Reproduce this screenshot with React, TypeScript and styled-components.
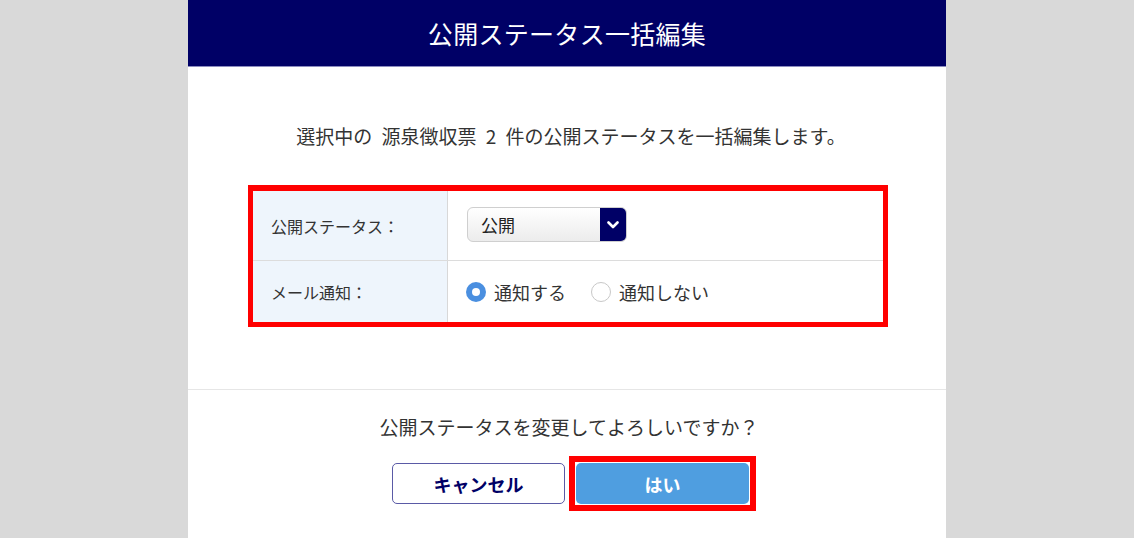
import React from "react";
import styled, { createGlobalStyle } from "styled-components";

const Global = createGlobalStyle`
  html, body { margin: 0; padding: 0; background: #d9d9d9; }
  body { font-family: Meiryo, "Noto Sans CJK JP", "Noto Sans", sans-serif; color: #333; }
  * { box-sizing: border-box; }
`;

const Modal = styled.div`
  width: 758px;
  height: 538px;
  margin: 0 auto;
  background: #fff;
  display: flex;
  flex-direction: column;
  overflow: hidden;
`;

const Header = styled.header`
  height: 67px;
  flex: none;
  background: #000066;
  border-bottom: 1px solid #8c8cc0;
  display: flex;
  align-items: center;
  justify-content: center;
  color: #fff;
  font-size: 25px;
  letter-spacing: 0.3px;
`;

const Body = styled.section`
  padding: 55px 58px 62px 60px;
  border-bottom: 1px solid #e6e6e6;
  display: flex;
  flex-direction: column;
  align-items: center;
`;

const Lead = styled.p`
  margin: 0 0 35px;
  font-size: 19px;
  line-height: 28px;
  color: #333;
  word-spacing: 5px;
  padding-left: 6px;
`;

const FormBox = styled.div`
  width: 640px;
  border: 5px solid #ff0000;
  border-top-width: 6px;
  display: flex;
  flex-direction: column;
`;

const Row = styled.div<{ $h: number; $last?: boolean }>`
  height: ${(p) => p.$h}px;
  display: grid;
  grid-template-columns: 195px 1fr;
  border-bottom: ${(p) => (p.$last ? "none" : "1.5px solid #dcdcdc")};
`;

const Label = styled.div`
  background: #eef5fc;
  border-right: 1.5px solid #d8d8d8;
  display: flex;
  align-items: center;
  padding-left: 18px;
  font-size: 16px;
  color: #333;
`;

const Value = styled.div`
  display: flex;
  align-items: center;
  padding-left: 18px;
  gap: 25px;
`;

const Select = styled.div`
  width: 160px;
  height: 35px;
  margin-top: -2px;
  margin-left: 1px;
  border: 1px solid #cfcfcf;
  border-radius: 6px;
  background: linear-gradient(#ffffff, #ececec);
  display: flex;
  overflow: hidden;
`;

const SelectText = styled.span`
  flex: 1;
  display: flex;
  align-items: center;
  padding-left: 13px;
  font-size: 17px;
  color: #222;
`;

const SelectArrow = styled.span`
  width: 26px;
  background: #000066;
  display: flex;
  align-items: center;
  justify-content: center;
`;

const RadioItem = styled.label`
  display: flex;
  align-items: center;
  gap: 8px;
  font-size: 18px;
  color: #333;
`;

const RadioDot = styled.span<{ $on?: boolean }>`
  width: 20px;
  height: 20px;
  border-radius: 50%;
  background: ${(p) => (p.$on ? "#4a8fe0" : "#fff")};
  border: ${(p) => (p.$on ? "none" : "1px solid #c8c8c8")};
  display: flex;
  align-items: center;
  justify-content: center;
  &::after {
    content: "";
    width: 8px;
    height: 8px;
    border-radius: 50%;
    background: #fff;
    display: ${(p) => (p.$on ? "block" : "none")};
  }
`;

const Footer = styled.section`
  padding-top: 23px;
  display: flex;
  flex-direction: column;
  align-items: center;
`;

const Question = styled.p`
  margin: 0 0 15px;
  font-size: 19px;
  line-height: 28px;
  color: #333;
  padding-left: 4px;
`;

const Buttons = styled.div`
  display: flex;
  align-items: center;
  gap: 4px;
  padding-left: 14px;
`;

const Highlight = styled.span`
  display: flex;
  border: 6px solid #ff0000;
  padding: 1px;
`;

const Button = styled.button<{ $primary?: boolean }>`
  width: 173px;
  height: 41px;
  border-radius: 5px;
  font-family: inherit;
  font-size: 18px;
  font-weight: bold;
  cursor: pointer;
  color: ${(p) => (p.$primary ? "#fff" : "#000066")};
  background: ${(p) => (p.$primary ? "#4f9ee0" : "#fff")};
  border: ${(p) => (p.$primary ? "none" : "1.5px solid #5a5aa6")};
`;

export default function App() {
  return (
    <>
      <Global />
      <Modal>
        <Header>公開ステータス一括編集</Header>
        <Body>
          <Lead>選択中の 源泉徴収票 2 件の公開ステータスを一括編集します。</Lead>
          <FormBox>
            <Row $h={70}>
              <Label>公開ステータス：</Label>
              <Value>
                <Select>
                  <SelectText>公開</SelectText>
                  <SelectArrow>
                    <svg width="12" height="8" viewBox="0 0 12 8">
                      <polyline
                        points="1.5,1.5 6,6 10.5,1.5"
                        fill="none"
                        stroke="#fff"
                        strokeWidth="2.6"
                        strokeLinecap="round"
                        strokeLinejoin="round"
                      />
                    </svg>
                  </SelectArrow>
                </Select>
              </Value>
            </Row>
            <Row $h={61} $last>
              <Label>メール通知：</Label>
              <Value>
                <RadioItem>
                  <RadioDot $on />
                  通知する
                </RadioItem>
                <RadioItem>
                  <RadioDot />
                  通知しない
                </RadioItem>
              </Value>
            </Row>
          </FormBox>
        </Body>
        <Footer>
          <Question>公開ステータスを変更してよろしいですか？</Question>
          <Buttons>
            <Button>キャンセル</Button>
            <Highlight>
              <Button $primary>はい</Button>
            </Highlight>
          </Buttons>
        </Footer>
      </Modal>
    </>
  );
}
